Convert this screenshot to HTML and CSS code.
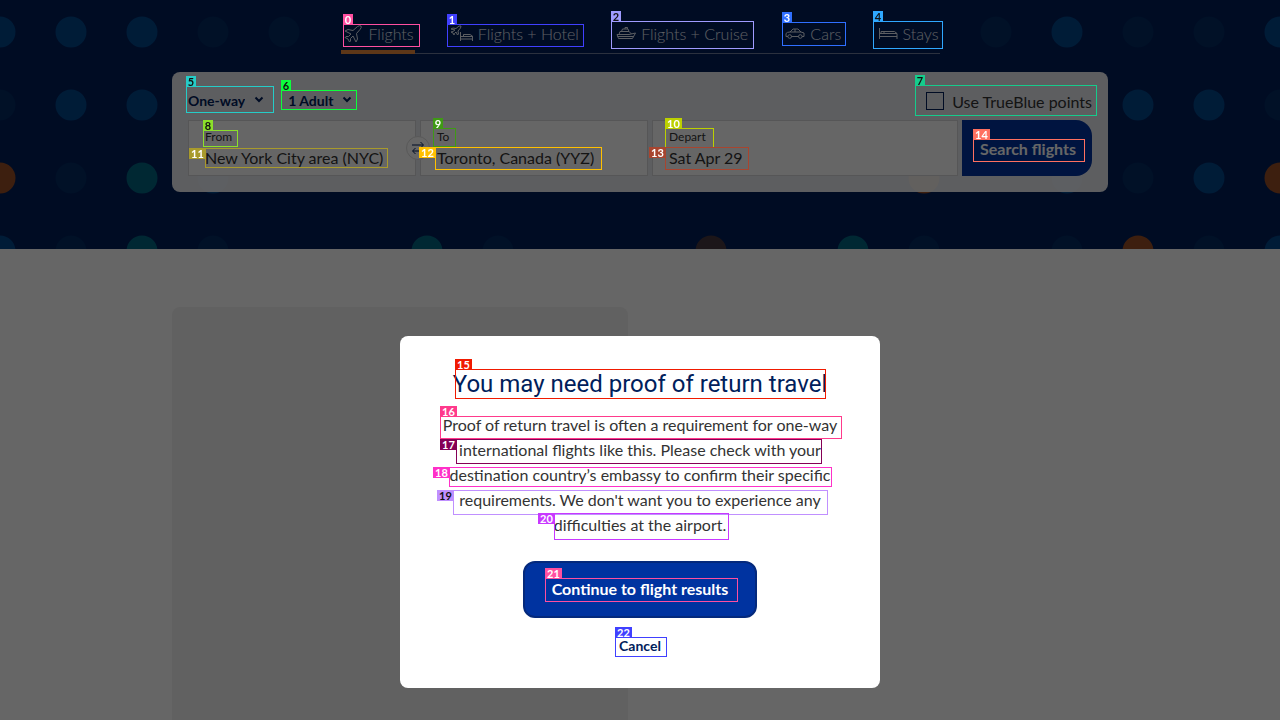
FILE: index.html
```html
<!DOCTYPE html>
<html lang="en">
<head>
<meta charset="utf-8">
<meta name="viewport" content="width=device-width, initial-scale=1">
<title>Flights</title>
<link rel="stylesheet" href="styles.css">
</head>
<body>
<header class="hero">
  <svg class="dots" viewBox="0 0 1280 249" preserveAspectRatio="xMidYMin slice" aria-hidden="true">
    <g class="dot-blue"><circle cx="0" cy="32" r="15.5"/><circle cx="71" cy="32" r="15.5"/><circle cx="142" cy="32" r="15.5"/><circle cx="1067" cy="32" r="15.5"/><circle cx="1280" cy="32" r="15.5"/><circle cx="71" cy="105" r="15.5"/><circle cx="142" cy="105" r="15.5"/><circle cx="1138" cy="105" r="15.5"/><circle cx="1209" cy="105" r="15.5"/><circle cx="1209" cy="178" r="15.5"/><circle cx="1067" cy="178" r="15.5"/><circle cx="213" cy="178" r="15.5"/><circle cx="0" cy="251" r="15.5"/><circle cx="1280" cy="251" r="15.5"/></g>
    <g class="dot-faint"><circle cx="213" cy="32" r="15.5"/><circle cx="284" cy="32" r="15.5"/><circle cx="996" cy="32" r="15.5"/><circle cx="1138" cy="32" r="15.5"/><circle cx="1209" cy="32" r="15.5"/><circle cx="0" cy="105" r="15.5"/><circle cx="1280" cy="105" r="15.5"/><circle cx="71" cy="178" r="15.5"/><circle cx="1138" cy="178" r="15.5"/><circle cx="71" cy="251" r="15.5"/><circle cx="213" cy="251" r="15.5"/><circle cx="498" cy="251" r="15.5"/><circle cx="924" cy="251" r="15.5"/><circle cx="1067" cy="251" r="15.5"/><circle cx="1209" cy="251" r="15.5"/></g>
    <g class="dot-teal"><circle cx="142" cy="178" r="15.5"/><circle cx="142" cy="251" r="15.5"/><circle cx="427" cy="251" r="15.5"/><circle cx="853" cy="251" r="15.5"/></g>
    <g class="dot-orange"><circle cx="0" cy="178" r="15.5"/><circle cx="1280" cy="178" r="15.5"/><circle cx="924" cy="178" r="15.5"/><circle cx="1138" cy="251" r="15.5"/></g>
    <circle class="dot-brown" cx="711" cy="251" r="15.5"/>
  </svg>
  <nav class="tabs">
    <a class="tab active" href="#"><svg width="18" height="18" viewBox="0 0 18 18"><path d="M1 6 L4 4.500 L9 5.500 L13.500 1.500 Q16 0 17 1 Q18 2 16 4.500 L12.500 8.500 L13.500 14 L12 17 L9 11 L6.500 13.500 L6.500 16 L5.500 17 L4 14 L1 12.500 L2 11.500 L4.500 11.500 L7 9 Z"/></svg>Flights</a>
    <a class="tab" href="#"><svg width="22" height="18" viewBox="0 0 22 18"><path d="M0 4 L2 3 L5 3.500 L8 1 L10 1 L9.500 3 L7 6 L7.500 9 L6.500 10 L5 7 L3.500 8.500 L3 10 L2 8 L0 7 L2 6.500 L4 5 Z M9.500 7 V16 M9.500 14 H21.500 M21.500 16 V11 L19 9.500 H12.500 V11.500 M9.500 11.500 H21.500"/></svg>Flights + Hotel</a>
    <a class="tab" href="#"><svg width="20" height="18" viewBox="0 0 20 18"><path d="M1 9.500 H13 L19.500 8 L16.500 13.500 H2.500 Z M3 9.500 L4 6.500 H13 L15.500 9 M5.500 6.500 L6.500 4 H12 L13 6.500 M9 4 V2.500 H11.500 V4 M1.500 11.500 H17.500"/></svg>Flights + Cruise</a>
    <a class="tab" href="#"><svg width="20" height="18" viewBox="0 0 20 18"><path d="M3 11.500 H1 V8.500 Q2 7 5 7 L8 4 H13 L16 7 L19 8 V11.500 H17 M6.500 11.500 H13.500 M5 7 H16 M10 4 V7"/><circle cx="4.700" cy="11.500" r="1.800"/><circle cx="15.300" cy="11.500" r="1.800"/></svg>Cars</a>
    <a class="tab" href="#"><svg width="19" height="18" viewBox="0 0 19 18"><path d="M.5 3 V14 M.5 11.500 H18 M18 14 V8.500 L15.500 6.500 H5 V8.500 M.5 8.500 H18 M5 6.500 H2 V8.500"/></svg>Stays</a>
  </nav>
  <form class="search">
    <div class="options">
      <label class="trip"><select aria-label="Trip type"><option>One-way</option></select><svg width="10" height="8" viewBox="0 0 10 8"><path d="M1.500 1.500 L5 5 L8.500 1.500"/></svg></label>
      <button class="pax" type="button">1 Adult <svg width="10" height="8" viewBox="0 0 10 8"><path d="M1.500 1.500 L5 5 L8.500 1.500"/></svg></button>
      <label class="points"><input type="checkbox">Use TrueBlue points</label>
    </div>
    <div class="fields">
      <div class="field"><label for="from">From</label><input id="from" type="text" value="New York City area (NYC)">
        <button class="swap" type="button" aria-label="Swap cities"><svg width="14" height="14" viewBox="0 0 14 14"><path d="M1 4 H12 M9.500 1 L12.500 4 L9.500 7 M13 10 H2 M4.500 7 L1.500 10 L4.500 13"/></svg></button></div>
      <div class="field"><label for="to">To</label><input id="to" type="text" value="Toronto, Canada (YYZ)"></div>
      <div class="field"><label for="depart">Depart</label><input id="depart" type="text" value="Sat Apr 29"></div>
      <button class="submit" type="button">Search flights</button>
    </div>
  </form>
</header>
<main class="content"><section class="placeholder"></section></main>

<div class="backdrop">
  <div class="marks page-marks" aria-hidden="true">
    <div class="mark m0"><span>0</span></div>
    <div class="mark m1"><span>1</span></div>
    <div class="mark dark m2"><span>2</span></div>
    <div class="mark m3"><span>3</span></div>
    <div class="mark dark m4"><span>4</span></div>
    <div class="mark dark m5"><span>5</span></div>
    <div class="mark dark m6"><span>6</span></div>
    <div class="mark dark m7"><span>7</span></div>
    <div class="mark dark m8"><span>8</span></div>
    <div class="mark m9"><span>9</span></div>
    <div class="mark wide m10"><span>10</span></div>
    <div class="mark wide side m11"><span>11</span></div>
    <div class="mark wide side m12"><span>12</span></div>
    <div class="mark wide side m13"><span>13</span></div>
    <div class="mark wide m14"><span>14</span></div>
  </div>
  <div class="modal" role="dialog" aria-modal="true" aria-labelledby="title">
    <h1 id="title">You may need proof of return travel</h1>
    <p>Proof of return travel is often a requirement for one-way<br>international flights like this. Please check with your<br>destination country’s embassy to confirm their specific<br>requirements. We don't want you to experience any<br>difficulties at the airport.</p>
    <button class="continue" type="button">Continue to flight results</button>
    <button class="cancel" type="button">Cancel</button>
    <div class="marks" aria-hidden="true">
      <div class="mark wide m15"><span>15</span></div>
      <div class="mark wide m16"><span>16</span></div>
      <div class="mark wide side m17"><span>17</span></div>
      <div class="mark wide side m18"><span>18</span></div>
      <div class="mark wide side dark m19"><span>19</span></div>
      <div class="mark wide side m20"><span>20</span></div>
      <div class="mark wide m21"><span>21</span></div>
      <div class="mark wide m22"><span>22</span></div>
    </div>
  </div>
</div>
</body>
</html>
```
FILE: styles.css
```css
* { box-sizing: border-box; }
body { margin: 0; min-height: 100vh; display: flex; flex-direction: column; overflow: hidden; background: #fff; color: #333; font-family: Lato, "Open Sans", sans-serif; font-size: 16px; }
button, input, select { font: inherit; color: inherit; }
svg { fill: none; stroke: currentColor; flex: none; }

.hero { position: relative; background: #001e58; padding: 16px 16px 57px; }
.dots { position: absolute; inset: 0; width: 100%; height: 100%; stroke: none; }
.dot-blue { fill: #00478a; }
.dot-faint { fill: #032c62; }
.dot-teal { fill: #006580; }
.dot-orange { fill: #984f27; }
.dot-brown { fill: #48383f; }

.tabs { position: relative; display: flex; justify-content: space-between; max-width: 599px; margin: 0 auto; padding: 0 1px 0 3px; border-bottom: 1px solid #6c7c9c; }
.tab { position: relative; display: flex; align-items: center; gap: 5px; height: 37px; padding-bottom: 2px; color: #e6ebf5; font-weight: 300; text-decoration: none; }
.tab svg { stroke-width: 1; }
.tab.active { gap: 7px; }
.tab.active::after { content: ""; position: absolute; left: -3px; right: -1px; bottom: -1px; height: 4px; background: #e88a3c; }

.search { position: relative; max-width: 936px; margin: 18px auto 0; padding: 8px 16px 16px; border-radius: 8px; background: rgba(255, 255, 255, .91); }
.options { display: flex; align-items: center; height: 40px; color: #00205b; font-size: 14px; font-weight: 700; }
.options svg { stroke-width: 2; }
.trip { display: flex; align-items: center; gap: 9px; }
.trip select { appearance: none; border: 0; padding: 0; background: none; field-sizing: content; }
.pax { display: flex; align-items: center; gap: 9px; margin-left: 24px; padding: 0; border: 0; background: none; }
.points { display: flex; align-items: center; gap: 8px; margin-left: auto; padding-top: 2px; color: #333; font-size: 16px; font-weight: 400; }
.points input { appearance: none; width: 18px; height: 18px; margin: 0; border: 1px solid #00205b; }
.fields { display: grid; grid-template-columns: 228fr 228fr 306fr 130px; gap: 4px; }
.field { position: relative; display: flex; flex-direction: column; height: 56px; padding: 7px 16px; border: 1px solid #d8d8da; background: #fff; }
.field label { font-size: 12px; line-height: 18px; }
.field input { width: 100%; height: 22px; padding: 0; border: 0; background: none; font-size: 16px; }
.swap { position: absolute; z-index: 1; right: -15px; top: 15px; width: 24px; height: 24px; padding: 4px; border: 1px solid #ddd; border-radius: 50%; background: #fff; color: #00205b; }
.swap svg { display: block; stroke-width: 1; }
.submit { padding: 0 0 0 2px; border: 0; border-radius: 0 16px 16px 0; background: #0033a0; color: #fff; font-weight: 700; }

.content { flex: 1; display: flex; width: 100%; max-width: 936px; margin: 0 auto; padding-top: 58px; }
.placeholder { width: 456px; border-radius: 8px 8px 0 0; background: #f3f3f3; }

.backdrop { position: fixed; z-index: 10; inset: 0; display: flex; align-items: flex-end; justify-content: center; padding: 32px 16px; background: rgba(0, 0, 0, .6); }
.modal { position: relative; display: flex; flex-direction: column; align-items: center; width: 480px; padding: 32px; border-radius: 8px; background: #fff; }
.modal h1 { margin: 0; color: #00205b; font-family: Roboto, sans-serif; font-size: 24px; font-weight: 400; line-height: 32px; white-space: nowrap; }
.modal p { margin: 12px 0 24px; line-height: 25px; text-align: center; white-space: nowrap; }
.continue { width: 234px; height: 57px; padding: 0 0 2px; border: 2px solid #04297c; border-radius: 12px; background: #0033a0; color: #fff; font-weight: 700; }
.cancel { margin-top: 18px; padding: 0; border: 0; background: none; color: #00205b; font-size: 14px; font-weight: 700; line-height: 20px; }

.marks { position: absolute; left: 0; top: 0; pointer-events: none; }
.page-marks { left: 50%; }
.mark { position: absolute; border: 1px solid var(--c); color: #fff; }
.mark.dark { color: #111; }
.mark span { position: absolute; left: -1px; top: -11px; width: 10px; height: 11px; background: var(--c); font-size: 11px; font-weight: 700; line-height: 11px; text-align: center; }
.mark.wide span { width: 17px; }
.mark.side span { left: -17px; top: -1px; }
.m0 { --c: #ff4fa0; left: -297px; top: 24px; width: 77px; height: 23px; }
.m1 { --c: #4040ff; left: -193px; top: 24px; width: 137px; height: 23px; }
.m2 { --c: #9f9bff; left: -29px; top: 21px; width: 143px; height: 28px; }
.m3 { --c: #2f6fff; left: 142px; top: 22px; width: 64px; height: 24px; }
.m4 { --c: #2fa8ff; left: 233px; top: 21px; width: 70px; height: 28px; }
.m5 { --c: #25ccc8; left: -454px; top: 86px; width: 88px; height: 27px; }
.m6 { --c: #0dff3c; left: -359px; top: 90px; width: 76px; height: 20px; }
.m7 { --c: #15cc8c; left: 275px; top: 85px; width: 182px; height: 31px; }
.m8 { --c: #8be02a; left: -437px; top: 130px; width: 35px; height: 17px; }
.m9 { --c: #3f9a15; left: -207px; top: 128px; width: 23px; height: 19px; }
.m10 { --c: #bcd000; left: 25px; top: 128px; width: 49px; height: 20px; border-bottom: 0; }
.m11 { --c: #a89a2c; left: -435px; top: 148px; width: 183px; height: 20px; }
.m12 { --c: #ffc000; left: -205px; top: 147px; width: 167px; height: 23px; }
.m13 { --c: #a8452f; left: 25px; top: 147px; width: 84px; height: 23px; }
.m14 { --c: #ff7060; left: 333px; top: 139px; width: 112px; height: 23px; }
.m15 { --c: #f01a00; left: 55px; top: 33px; width: 371px; height: 30px; }
.m16 { --c: #ff3a8c; left: 40px; top: 80px; width: 402px; height: 23px; }
.m17 { --c: #850055; left: 56px; top: 103px; width: 366px; height: 25px; }
.m18 { --c: #ff30c8; left: 49px; top: 131px; width: 383px; height: 20px; }
.m19 { --c: #c090ff; left: 53px; top: 154px; width: 375px; height: 25px; }
.m20 { --c: #c838ff; left: 154px; top: 177px; width: 175px; height: 27px; }
.m21 { --c: #ff4fa0; left: 145px; top: 242px; width: 193px; height: 24px; }
.m22 { --c: #4040ff; left: 215px; top: 301px; width: 52px; height: 20px; }
```
